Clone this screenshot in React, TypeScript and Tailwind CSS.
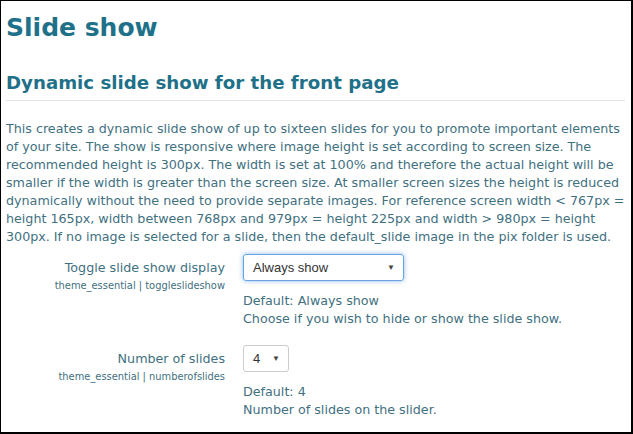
import React from "react";

const body = "font-['DejaVu_Sans',Verdana,sans-serif]";

function FakeSelect({ value, width }: { value: string; width: string }) {
  return (
    <div
      className={
        "flex items-center justify-between h-[27px] rounded-[3px] border bg-white pl-[9px] pr-[8px] text-[13px] text-[#333] font-['Liberation_Sans',Arial,sans-serif] " +
        width
      }
    >
      <span>{value}</span>
      <span className="text-[8px] text-[#444]">▼</span>
    </div>
  );
}

function SettingRow({
  label,
  name,
  select,
  def,
  desc,
}: {
  label: string;
  name: string;
  select: React.ReactNode;
  def: string;
  desc: string;
}) {
  return (
    <div className="flex">
      <div className="w-[219px] shrink-0 text-right pt-[5px]">
        <div className="text-[12.7px] leading-[18px]">{label}</div>
        <div className="text-[9.9px] leading-[14px] mt-[2px]">{name}</div>
      </div>
      <div className="ml-[18px] flex-1">
        {select}
        <div className="mt-[11px] text-[12.7px] leading-[18px]">
          <div>Default: {def}</div>
          <div>{desc}</div>
        </div>
      </div>
    </div>
  );
}

export default function App() {
  return (
    <div
      className={
        "w-[633px] h-[434px] overflow-hidden bg-white border border-black border-r-2 border-b-2 text-[#41707f] " +
        body
      }
    >
      <div className="pl-[5px] pr-[6px]">
        <h2 className="mt-[11px] text-[25px] leading-[32px] font-bold text-[#1f7189]">
          Slide show
        </h2>
        <h3 className="mt-[27px] text-[18.2px] leading-[24px] font-bold text-[#1f7189]">
          Dynamic slide show for the front page
        </h3>
        <div className="mt-[5px] border-t border-[#e2e2e2]" />
        <p className="mt-[19px] text-[12.7px] leading-[18px]">
          This creates a dynamic slide show of up to sixteen slides for you to promote important
          elements of your site. The show is responsive where image height is set according to
          screen size. The recommended height is 300px. The width is set at 100% and therefore the
          actual height will be smaller if the width is greater than the screen size. At smaller
          screen sizes the height is reduced dynamically without the need to provide separate
          images. For reference screen width &lt; 767px = height 165px, width between 768px and
          979px = height 225px and width &gt; 980px = height 300px. If no image is selected for a
          slide, then the default_slide image in the pix folder is used.
        </p>
        <div className="mt-[8px] flex flex-col gap-[17px]">
          <SettingRow
            label="Toggle slide show display"
            name="theme_essential | toggleslideshow"
            select={
              <div className="w-[161px] rounded-[3px] shadow-[0_0_5px_rgba(102,160,220,0.7)]">
                <FakeSelect value="Always show" width="w-[161px] border-[#66a3e0]" />
              </div>
            }
            def="Always show"
            desc="Choose if you wish to hide or show the slide show."
          />
          <SettingRow
            label="Number of slides"
            name="theme_essential | numberofslides"
            select={<FakeSelect value="4" width="w-[46px] border-[#ccc]" />}
            def="4"
            desc="Number of slides on the slider."
          />
        </div>
      </div>
    </div>
  );
}
